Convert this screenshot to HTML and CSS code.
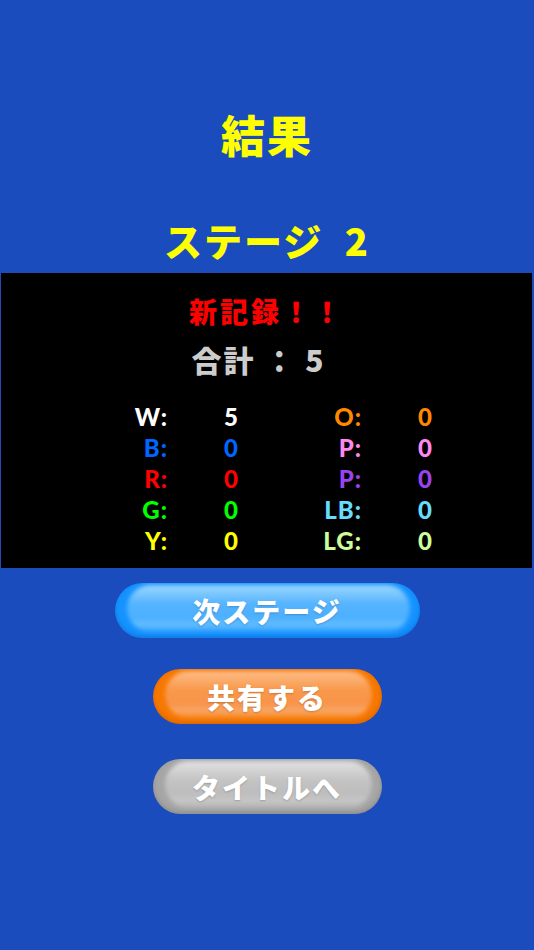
FILE: index.html
```html
<!DOCTYPE html>
<html lang="ja">
<head>
  <meta charset="UTF-8" />
  <meta name="viewport" content="width=device-width, initial-scale=1.0"/>
  <title>結果</title>
  <link rel="stylesheet" href="styles.css">
</head>
<body>

  <h1 class="title">結果</h1>
  <h2 class="stage">ステージ&nbsp; 2</h2>

  <div class="panel">
    <p class="record">新記録！！</p>
    <p class="total">合計 ： 5</p>

    <div class="stats">
      <span class="lbl c-w">W:</span><span class="val c-w">5</span>
      <span class="lbl c-o">O:</span><span class="val c-o">0</span>

      <span class="lbl c-b">B:</span><span class="val c-b">0</span>
      <span class="lbl c-pk">P:</span><span class="val c-pk">0</span>

      <span class="lbl c-r">R:</span><span class="val c-r">0</span>
      <span class="lbl c-pu">P:</span><span class="val c-pu">0</span>

      <span class="lbl c-g">G:</span><span class="val c-g">0</span>
      <span class="lbl c-lb">LB:</span><span class="val c-lb">0</span>

      <span class="lbl c-y">Y:</span><span class="val c-y">0</span>
      <span class="lbl c-lg">LG:</span><span class="val c-lg">0</span>
    </div>
  </div>

  <div class="buttons">
    <button class="btn btn-next">次ステージ</button>
    <button class="btn btn-share">共有する</button>
    <button class="btn btn-title">タイトルへ</button>
  </div>

</body>
</html>
```

FILE: styles.css
```css
body {
  margin: 0;
  background: #1a4cbd;
  font-family: "Noto Sans CJK JP", "Noto Sans", sans-serif;
  font-weight: 900;
  text-align: center;
}
.title {
  margin: 109px 0 0;
  font-size: 44px;
  line-height: 50px;
  font-weight: 900;
  letter-spacing: 2px;
  color: #ffff00;
}
.stage {
  margin: 59px 0 0;
  font-size: 38px;
  line-height: 44px;
  font-weight: 900;
  letter-spacing: 2px;
  color: #ffff00;
}
.panel {
  margin: 11px 2px 0 1px;
  height: 295px;
  background: #000;
  padding-top: 21px;
  box-sizing: border-box;
}
.record {
  margin: 0;
  font-size: 28px;
  line-height: 34px;
  letter-spacing: 3px;
  color: #ff0000;
}
.total {
  margin: 13px 0 0;
  font-size: 30px;
  line-height: 36px;
  letter-spacing: 2px;
  color: #cccccc;
  padding-right: 16px;
}
.stats {
  display: grid;
  grid-template-columns: 61px 126px 68px 126px;
  grid-auto-rows: 31px;
  margin: 24px 0 0 106px;
  font-family: Lato, "Noto Sans", sans-serif;
  font-size: 24px;
  line-height: 31px;
}
.lbl {
  text-align: right;
  letter-spacing: 1px;
}
.val {
  text-align: center;
}
.c-w { color: #ffffff; }
.c-b { color: #0066ff; }
.c-r { color: #ff0000; }
.c-g { color: #00ff00; }
.c-y { color: #ffff00; }
.c-o { color: #ff8800; }
.c-pk { color: #ff88ee; }
.c-pu { color: #9944ee; }
.c-lb { color: #66ddff; }
.c-lg { color: #ccff99; }

.buttons {
  display: flex;
  flex-direction: column;
  align-items: center;
  padding-top: 15px;
}
.btn {
  position: relative;
  z-index: 0;
  height: 55px;
  border: none;
  border-radius: 28px;
  font-family: inherit;
  font-weight: 900;
  font-size: 28px;
  letter-spacing: 2px;
  color: #fff;
  text-shadow: 0 1px 2px rgba(0,0,0,0.2);
  overflow: hidden;
  padding: 0;
}
.btn::before {
  content: "";
  position: absolute;
  z-index: -1;
  left: 12px;
  right: 10px;
  top: 2px;
  bottom: 6px;
  border-radius: 24px;
  filter: blur(2px);
}
.btn-next {
  width: 305px;
  background: #1593ff;
  box-shadow: inset 0 -2px 4px rgba(0,60,160,0.3);
}
.btn-next::before {
  background: linear-gradient(#9ed8ff, #54b4ff 40%, #4cb0ff 70%, #64bfff 85%, #2a9cff);
}
.btn-share {
  width: 229px;
  margin-top: 31px;
  background: #f77800;
  box-shadow: inset 0 -2px 4px rgba(150,60,0,0.3);
}
.btn-share::before {
  background: linear-gradient(#fdbf8c, #f9984a 40%, #f8944a 70%, #f9a868 85%, #f7861a);
}
.btn-title {
  width: 229px;
  margin-top: 35px;
  background: #a6a6a6;
  box-shadow: inset 0 -2px 4px rgba(80,80,80,0.3);
}
.btn-title::before {
  background: linear-gradient(#e2e2e2, #c4c4c4 40%, #bdbdbd 70%, #c8c8c8 85%, #b0b0b0);
}
```
